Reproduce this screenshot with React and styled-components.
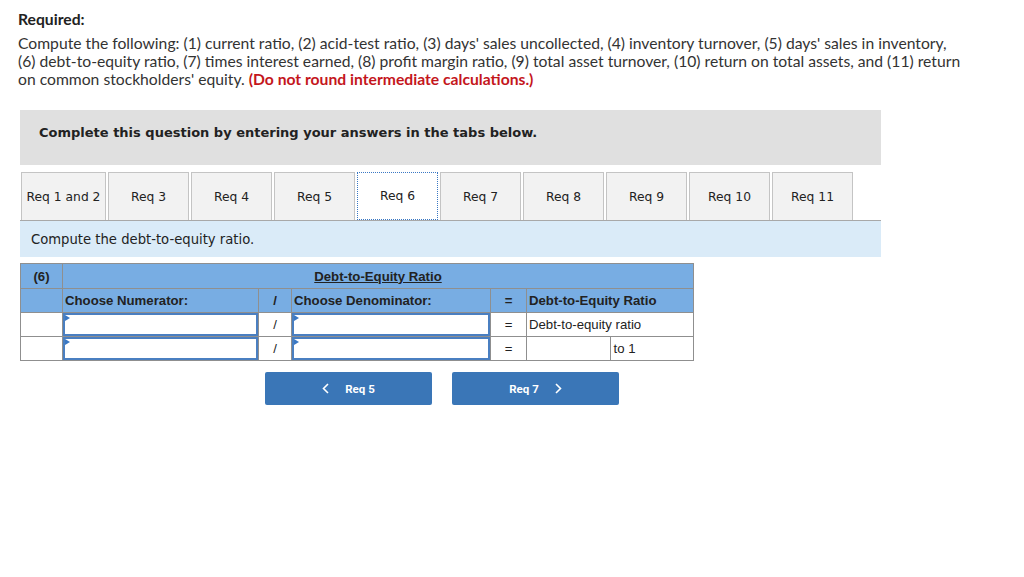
import React from 'react';
import styled, { createGlobalStyle } from 'styled-components';

const GlobalStyle = createGlobalStyle`
  body {
    margin: 0;
    background: #fff;
    font-family: "Lato", "Liberation Sans", sans-serif;
    color: #333;
  }
`;

const Page = styled.div`
  width: 1024px;
  height: 577px;
  padding: 10px 0 0 18px;
  box-sizing: border-box;
`;

const Intro = styled.div`
  font-size: 15.7px;
  line-height: 18px;
  color: #333;
  width: 948px;
`;

const Heading = styled.div`
  font-weight: 700;
  color: #222;
  margin-bottom: 6px;
`;

const Warn = styled.strong`
  color: #c4161c;
`;

const Panel = styled.div`
  margin: 22px 0 0 2px;
  width: 861px;
`;

const Banner = styled.div`
  background: #e0e0e0;
  height: 55px;
  padding: 15px 0 0 19px;
  box-sizing: border-box;
  font-family: "DejaVu Sans", Verdana, sans-serif;
  font-weight: 700;
  font-size: 13px;
  color: #222;
`;

const TabRow = styled.div`
  display: flex;
  gap: 2px;
  margin-top: 7px;
  padding-left: 1px;
  border-bottom: 1.5px solid #a8a8a8;
`;

const Tab = styled.div`
  width: ${({ $wide }) => ($wide ? '85px' : '81px')};
  height: 48px;
  display: flex;
  align-items: center;
  justify-content: center;
  box-sizing: border-box;
  font-family: "DejaVu Sans", Verdana, sans-serif;
  font-size: 12.3px;
  color: #222;
  background: ${({ $active }) => ($active ? '#fff' : '#f2f2f2')};
  border: ${({ $active }) => ($active ? '1.5px dotted #3a78c4' : '1px solid #c4c4c4')};
  border-bottom: ${({ $active }) => ($active ? '1.5px dotted #3a78c4' : 'none')};
  margin-bottom: ${({ $active }) => ($active ? '-2px' : '0')};
`;

const Prompt = styled.div`
  background: #daebf8;
  height: 36px;
  padding-left: 11px;
  display: flex;
  align-items: center;
  font-family: "DejaVu Sans", Verdana, sans-serif;
  font-size: 13.2px;
  color: #222;
`;

const Table = styled.table`
  margin: 6px 0 0 2px;
  border-collapse: collapse;
  font-family: "Liberation Sans", Arial, sans-serif;
  font-size: 13.2px;
  color: #222;
  table-layout: fixed;
`;

const Cell = styled.td`
  border: 1px solid #8f8f8f;
  height: 24px;
  padding: 0 2px;
  box-sizing: border-box;
  background: ${({ $head }) => ($head ? '#78ade3' : '#fff')};
  font-weight: ${({ $head }) => ($head ? 700 : 400)};
  text-align: ${({ $align }) => $align || 'left'};
  position: relative;
`;

const Title = styled.span`
  text-decoration: underline;
`;

const InputBox = styled.div`
  position: absolute;
  inset: 0;
  border: 2px solid #4a7fc1;
  background: #fff;
  &::before {
    content: '';
    position: absolute;
    left: 0;
    top: 0;
    border-left: 5px solid #3a78c4;
    border-top: 3px solid transparent;
    border-bottom: 3px solid transparent;
  }
`;

const Split = styled.div`
  display: flex;
  height: 100%;
  margin: 0 -2px;
`;

const SplitPart = styled.div`
  flex: 1;
  display: flex;
  align-items: center;
  padding-left: 3px;
  border-left: ${({ $line }) => ($line ? '1px solid #8f8f8f' : 'none')};
`;

const Nav = styled.div`
  display: flex;
  gap: 20px;
  margin: 11px 0 0 247px;
`;

const NavButton = styled.button`
  width: 167px;
  height: 33px;
  border: none;
  border-radius: 2px;
  background: #3a76b7;
  color: #fff;
  font-family: "Roboto", "Liberation Sans", sans-serif;
  font-weight: 700;
  font-size: 11.5px;
  display: flex;
  align-items: center;
  justify-content: center;
  gap: 16px;
`;

const Chevron = ({ dir }) => (
  <svg width="7" height="11" viewBox="0 0 7 11">
    <path
      d={dir === 'left' ? 'M6 1 L1.5 5.5 L6 10' : 'M1 1 L5.5 5.5 L1 10'}
      fill="none"
      stroke="#fff"
      strokeWidth="1.6"
    />
  </svg>
);

const tabs = ['Req 1 and 2', 'Req 3', 'Req 4', 'Req 5', 'Req 6', 'Req 7', 'Req 8', 'Req 9', 'Req 10', 'Req 11'];

export default function App() {
  return (
    <Page>
      <GlobalStyle />
      <Intro>
        <Heading>Required:</Heading>
        Compute the following: (1) current ratio, (2) acid-test ratio, (3) days' sales uncollected, (4) inventory turnover, (5) days' sales in inventory, (6) debt-to-equity ratio, (7) times interest earned, (8) profit margin ratio, (9) total asset turnover, (10) return on total assets, and (11) return on common stockholders' equity. <Warn>(Do not round intermediate calculations.)</Warn>
      </Intro>
      <Panel>
        <Banner>Complete this question by entering your answers in the tabs below.</Banner>
        <TabRow>
          {tabs.map((t, i) => (
            <Tab key={t} $wide={i === 0} $active={t === 'Req 6'}>{t}</Tab>
          ))}
        </TabRow>
        <Prompt>Compute the debt-to-equity ratio.</Prompt>
      </Panel>
      <Table>
        <colgroup>
          <col style={{ width: 42 }} />
          <col style={{ width: 196 }} />
          <col style={{ width: 33 }} />
          <col style={{ width: 199 }} />
          <col style={{ width: 36 }} />
          <col style={{ width: 167 }} />
        </colgroup>
        <tbody>
          <tr>
            <Cell $head $align="center" style={{ height: 25 }}>(6)</Cell>
            <Cell $head $align="center" colSpan={5}><Title>Debt-to-Equity Ratio</Title></Cell>
          </tr>
          <tr>
            <Cell $head />
            <Cell $head>Choose Numerator:</Cell>
            <Cell $head $align="center">/</Cell>
            <Cell $head>Choose Denominator:</Cell>
            <Cell $head $align="center">=</Cell>
            <Cell $head>Debt-to-Equity Ratio</Cell>
          </tr>
          <tr>
            <Cell />
            <Cell><InputBox /></Cell>
            <Cell $align="center">/</Cell>
            <Cell><InputBox /></Cell>
            <Cell $align="center">=</Cell>
            <Cell>Debt-to-equity ratio</Cell>
          </tr>
          <tr>
            <Cell />
            <Cell><InputBox /></Cell>
            <Cell $align="center">/</Cell>
            <Cell><InputBox /></Cell>
            <Cell $align="center">=</Cell>
            <Cell>
              <Split>
                <SplitPart />
                <SplitPart $line>to 1</SplitPart>
              </Split>
            </Cell>
          </tr>
        </tbody>
      </Table>
      <Nav>
        <NavButton><Chevron dir="left" />Req 5</NavButton>
        <NavButton>Req 7<Chevron dir="right" /></NavButton>
      </Nav>
    </Page>
  );
}
